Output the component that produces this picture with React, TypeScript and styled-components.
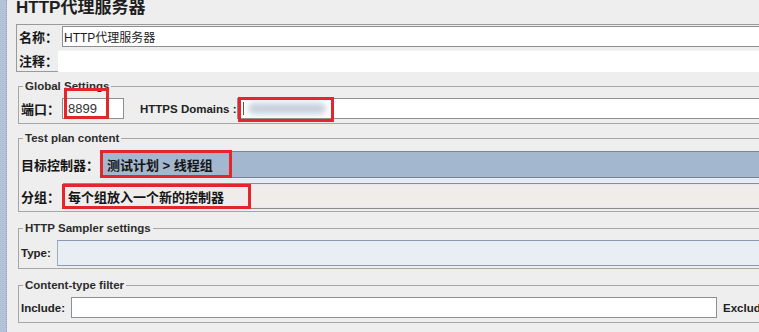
import styled, { createGlobalStyle } from "styled-components";

const GlobalStyle = createGlobalStyle`
  html, body {
    margin: 0;
    padding: 0;
    background: #eeeeee;
    overflow: hidden;
  }
  body {
    font-family: "Liberation Sans", "Noto Sans CJK SC", sans-serif;
    color: #1c1c1c;
  }
`;

const Screen = styled.div`
  display: flex;
  width: 759px;
  height: 332px;
  overflow: hidden;
  background: #eeeeee;
`;

const SplitEdge = styled.div`
  flex: 0 0 6px;
  background-color: #eef2f8;
  background-image: radial-gradient(#b3c2d9 0.8px, transparent 1px);
  background-size: 2px 2px;
  border-right: 1px dotted #90a3c2;
  margin-right: 1px;
`;

const Main = styled.div`
  flex: 0 0 790px;
  display: flex;
  flex-direction: column;
  padding-left: 8px;
  box-sizing: border-box;
`;

const Title = styled.div`
  height: 24px;
  font-size: 17px;
  font-weight: bold;
  line-height: 16px;
  color: #1e1e1e;
  white-space: nowrap;
`;

const NameBox = styled.div`
  display: flex;
  flex-direction: column;
  gap: 3px;
  height: 48px;
  box-sizing: border-box;
  border: 1px solid #9a9a9a;
  padding: 1px 0 0 2px;
`;

const Row = styled.div<{ $h: number; $mt?: number }>`
  display: flex;
  align-items: center;
  height: ${(p) => p.$h}px;
  margin-top: ${(p) => p.$mt ?? 0}px;
`;

const Label = styled.span<{ $w?: number; $ml?: number }>`
  flex: 0 0 ${(p) => (p.$w ? `${p.$w}px` : "auto")};
  margin-left: ${(p) => p.$ml ?? 0}px;
  font-size: 13px;
  font-weight: bold;
  white-space: nowrap;
  color: #161616;
`;

const EnLabel = styled(Label)`
  font-size: 11.5px;
  color: #222;
`;

const TextField = styled.div<{ $w?: number }>`
  position: relative;
  display: flex;
  align-items: center;
  flex: ${(p) => (p.$w ? `0 0 ${p.$w}px` : "1")};
  height: 100%;
  box-sizing: border-box;
  border: 1px solid #8e8e8e;
  background: #ffffff;
  padding-left: 1px;
  font-size: 12px;
  white-space: nowrap;
`;

const PortField = styled(TextField)`
  padding-left: 5px;
  font-size: 13px;
  color: #333;
`;

const CommentField = styled.div`
  flex: 1;
  height: 100%;
  background: #ffffff;
  border-top: 1px solid #f3f3f3;
`;

const Group = styled.fieldset<{ $mt: number; $pt: number; $pb: number }>`
  margin: ${(p) => p.$mt}px 0 0 2px;
  padding: ${(p) => p.$pt}px 0 ${(p) => p.$pb}px 2px;
  border: 1px solid #a6a6a6;
  min-width: 0;
`;

const Legend = styled.legend`
  margin-left: 2px;
  padding: 0 2px;
  font-size: 11.5px;
  font-weight: bold;
  line-height: 14px;
  color: #2c2c2c;
`;

const Combo = styled.div<{ $selected?: boolean }>`
  position: relative;
  flex: 1;
  display: flex;
  align-items: center;
  height: 100%;
  box-sizing: border-box;
  padding-left: ${(p) => (p.$selected ? 5 : 4)}px;
  border: 1px solid ${(p) => (p.$selected ? "#7b848f" : "#8b8b8b")};
  background: ${(p) => (p.$selected ? "#a3b7cf" : "#efecea")};
  box-shadow: ${(p) =>
    p.$selected
      ? "0 4px 0 #e4ebf4"
      : "inset 0 1px 0 #e2e9f2, inset 0 -1px 0 #e2e9f2"};
  font-size: 13px;
  font-weight: bold;
  color: #151515;
  white-space: nowrap;
`;

const TypeField = styled.div`
  flex: 1;
  height: 100%;
  box-sizing: border-box;
  border: 1px solid #8799b3;
  border-left-color: #9eacc1;
  background: #e9eef4;
`;

const Caret = styled.span`
  width: 1px;
  height: 13px;
  margin-left: 4px;
  background: #555;
`;

const Smudge = styled.span`
  width: 78px;
  height: 11px;
  margin-left: 4px;
  border-radius: 6px;
  background: #c6cfdb;
  filter: blur(3px);
`;

const Annotation = styled.div<{ $l: number; $t: number; $w: number; $h: number }>`
  position: absolute;
  left: ${(p) => p.$l}px;
  top: ${(p) => p.$t}px;
  width: ${(p) => p.$w}px;
  height: ${(p) => p.$h}px;
  box-sizing: border-box;
  border: 3px solid #e2262c;
  pointer-events: none;
`;

export default function App() {
  return (
    <>
      <GlobalStyle />
      <Screen>
        <SplitEdge />
        <Main>
          <Title>HTTP代理服务器</Title>

          <NameBox>
            <Row $h={21}>
              <Label $w={43}>名称：</Label>
              <TextField>HTTP代理服务器</TextField>
            </Row>
            <Row $h={21}>
              <Label $w={38}>注释：</Label>
              <CommentField />
            </Row>
          </NameBox>

          <Group $mt={7} $pt={5} $pb={4}>
            <Legend>Global Settings</Legend>
            <Row $h={21}>
              <Label $w={41}>端口：</Label>
              <PortField $w={62}>
                8899
                <Annotation $l={1} $t={-11} $w={45} $h={31} />
              </PortField>
              <EnLabel $w={97} $ml={16}>
                HTTPS Domains :
              </EnLabel>
              <TextField>
                <Caret />
                <Smudge />
                <Annotation $l={0} $t={-2} $w={96} $h={25} />
              </TextField>
            </Row>
          </Group>

          <Group $mt={7} $pt={6} $pb={2}>
            <Legend>Test plan content</Legend>
            <Row $h={27}>
              <Label $w={80}>目标控制器：</Label>
              <Combo $selected>
                测试计划 &gt; 线程组
                <Annotation $l={-2} $t={-2} $w={132} $h={28} />
              </Combo>
            </Row>
            <Row $h={26} $mt={5}>
              <Label $w={42}>分组：</Label>
              <Combo>
                每个组放入一个新的控制器
                <Annotation $l={-2} $t={0} $w={189} $h={25} />
              </Combo>
            </Row>
          </Group>

          <Group $mt={9} $pt={5} $pb={2}>
            <Legend>HTTP Sampler settings</Legend>
            <Row $h={26}>
              <EnLabel $w={36}>Type:</EnLabel>
              <TypeField />
            </Row>
          </Group>

          <Group $mt={9} $pt={5} $pb={4}>
            <Legend>Content-type filter</Legend>
            <Row $h={21}>
              <EnLabel $w={50}>Include:</EnLabel>
              <TextField $w={646} />
              <EnLabel $ml={6}>Exclude:</EnLabel>
              <TextField />
            </Row>
          </Group>
        </Main>
      </Screen>
    </>
  );
}
